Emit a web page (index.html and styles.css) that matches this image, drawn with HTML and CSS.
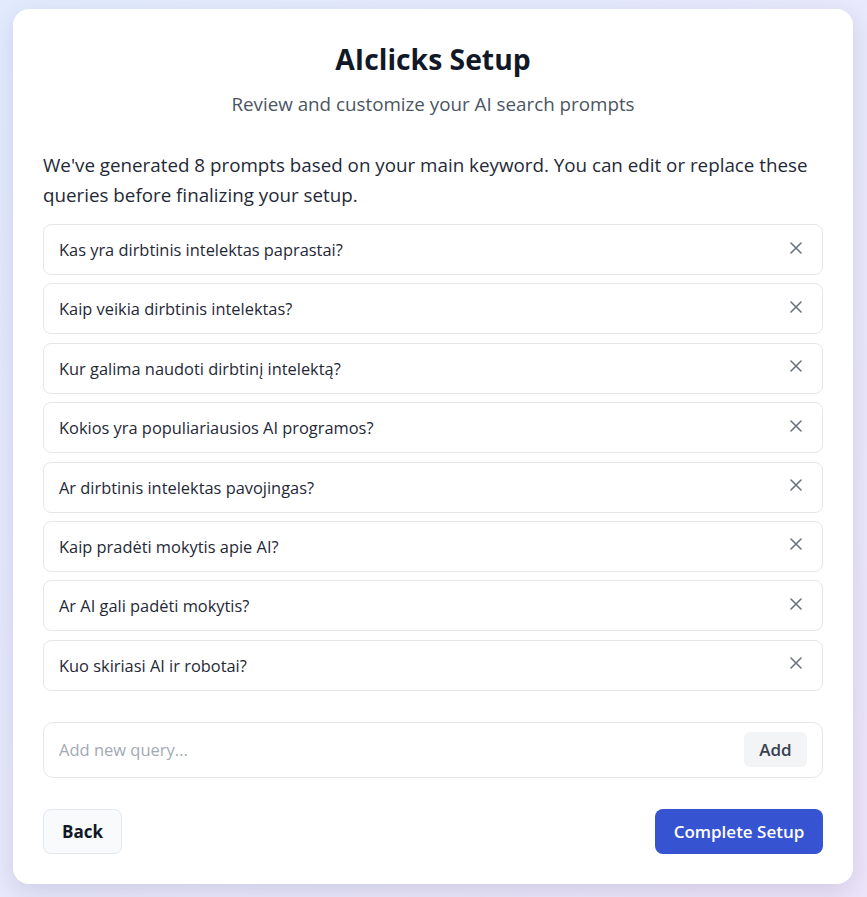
FILE: index.html
```html
<!DOCTYPE html>
<html lang="en">
<head>
<meta charset="utf-8">
<title>AIclicks Setup</title>
<link rel="stylesheet" href="styles.css">
</head>
<body>
<main class="card">
  <h1 class="title">AIclicks Setup</h1>
  <p class="subtitle">Review and customize your AI search prompts</p>
  <p class="intro">We've generated 8 prompts based on your main keyword. You can edit or replace these queries before finalizing your setup.</p>
  <ul class="queries">
    <li class="query"><span class="query-text">Kas yra dirbtinis intelektas paprastai?</span><button class="remove" aria-label="Remove"><svg viewBox="0 0 12 12" width="12" height="12"><path d="M1 1L11 11M11 1L1 11"/></svg></button></li>
    <li class="query"><span class="query-text">Kaip veikia dirbtinis intelektas?</span><button class="remove" aria-label="Remove"><svg viewBox="0 0 12 12" width="12" height="12"><path d="M1 1L11 11M11 1L1 11"/></svg></button></li>
    <li class="query"><span class="query-text">Kur galima naudoti dirbtinį intelektą?</span><button class="remove" aria-label="Remove"><svg viewBox="0 0 12 12" width="12" height="12"><path d="M1 1L11 11M11 1L1 11"/></svg></button></li>
    <li class="query"><span class="query-text">Kokios yra populiariausios AI programos?</span><button class="remove" aria-label="Remove"><svg viewBox="0 0 12 12" width="12" height="12"><path d="M1 1L11 11M11 1L1 11"/></svg></button></li>
    <li class="query"><span class="query-text">Ar dirbtinis intelektas pavojingas?</span><button class="remove" aria-label="Remove"><svg viewBox="0 0 12 12" width="12" height="12"><path d="M1 1L11 11M11 1L1 11"/></svg></button></li>
    <li class="query"><span class="query-text">Kaip pradėti mokytis apie AI?</span><button class="remove" aria-label="Remove"><svg viewBox="0 0 12 12" width="12" height="12"><path d="M1 1L11 11M11 1L1 11"/></svg></button></li>
    <li class="query"><span class="query-text">Ar AI gali padėti mokytis?</span><button class="remove" aria-label="Remove"><svg viewBox="0 0 12 12" width="12" height="12"><path d="M1 1L11 11M11 1L1 11"/></svg></button></li>
    <li class="query"><span class="query-text">Kuo skiriasi AI ir robotai?</span><button class="remove" aria-label="Remove"><svg viewBox="0 0 12 12" width="12" height="12"><path d="M1 1L11 11M11 1L1 11"/></svg></button></li>
  </ul>
  <div class="add-row">
    <input class="add-input" type="text" placeholder="Add new query...">
    <button class="add-btn">Add</button>
  </div>
  <div class="actions">
    <button class="btn-back">Back</button>
    <button class="btn-complete">Complete Setup</button>
  </div>
</main>
</body>
</html>
```

FILE: styles.css
```css
* { box-sizing: border-box; }
html, body { margin: 0; }
body {
  min-height: 897px;
  padding: 9px 14px 13px 13px;
  background: linear-gradient(135deg, #e2ebfe 0%, #e8e9fc 50%, #ede5fa 100%);
  font-family: "Open Sans", "Noto Sans", sans-serif;
  color: #1f2937;
}
.card {
  width: 840px;
  background: #fff;
  border-radius: 16px;
  padding: 30px 30px 30px;
  box-shadow: 0 8px 24px rgba(30, 30, 70, 0.13);
}
.title {
  margin: 0;
  text-align: center;
  font-size: 28.3px;
  line-height: 40px;
  font-weight: 700;
  color: #111827;
}
.subtitle {
  margin: 11px 0 0;
  text-align: center;
  font-size: 18.8px;
  line-height: 28px;
  color: #4b5563;
}
.intro {
  margin: 32px 0 0;
  font-size: 18.8px;
  line-height: 30px;
  color: #1f2937;
}
.queries {
  list-style: none;
  margin: 14px 0 0;
  padding: 0;
  display: flex;
  flex-direction: column;
  gap: 8.4px;
}
.query {
  height: 51px;
  border: 1px solid #e5e7eb;
  border-radius: 8px;
  display: flex;
  align-items: center;
  justify-content: space-between;
  padding: 0 20px 0 15px;
}
.query-text {
  font-size: 16.4px;
  color: #1f2937;
}
.remove {
  border: 0;
  background: none;
  padding: 0;
  width: 12px;
  height: 12px;
  display: flex;
  margin-top: -4px;
  cursor: pointer;
}
.remove svg path {
  stroke: #6b7280;
  stroke-width: 1.6;
  stroke-linecap: round;
  fill: none;
}
.add-row {
  margin-top: 31px;
  height: 56px;
  border: 1px solid #e5e7eb;
  border-radius: 10px;
  display: flex;
  align-items: center;
  padding: 0 15px 0 15px;
  gap: 12px;
}
.add-input {
  flex: 1;
  border: 0;
  outline: none;
  font-family: inherit;
  font-size: 16.5px;
  color: #1f2937;
  padding: 0;
  background: transparent;
}
.add-input::placeholder { color: #a3a9b4; }
.add-btn {
  width: 63px;
  height: 35px;
  border: 0;
  border-radius: 6px;
  background: #f3f4f6;
  font-family: inherit;
  font-size: 17px;
  font-weight: 600;
  color: #374151;
  padding: 0;
}
.actions {
  margin-top: 31px;
  display: flex;
  justify-content: space-between;
}
.btn-back {
  width: 79px;
  height: 45px;
  border: 1px solid #e2e8f0;
  border-radius: 8px;
  background: #f8fafc;
  font-family: inherit;
  font-size: 17px;
  font-weight: 700;
  color: #111827;
  padding: 0;
}
.btn-complete {
  width: 168px;
  height: 45px;
  border: 0;
  border-radius: 8px;
  background: #3653d1;
  font-family: inherit;
  font-size: 17px;
  font-weight: 600;
  color: #fff;
  padding: 0;
}
```
